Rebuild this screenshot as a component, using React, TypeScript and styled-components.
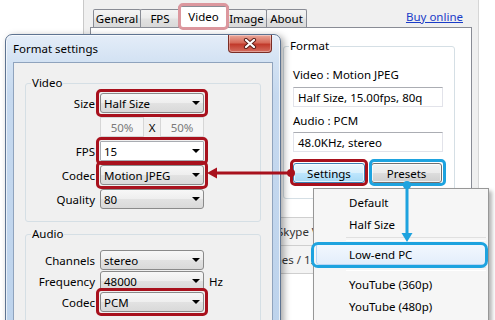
import React from "react";
import styled, { createGlobalStyle, css } from "styled-components";

const FONT = `"Noto Sans", "Open Sans", "DejaVu Sans", sans-serif`;
const RED = "#a8111d";
const BLUE = "#1ea3df";

const GlobalStyle = createGlobalStyle`
  html, body { margin: 0; padding: 0; background: #ffffff; }
  body { font-family: ${FONT}; font-size: 11.5px; color: #000; }
  * { box-sizing: border-box; }
`;

const Stage = styled.div`
  position: relative;
  width: 495px;
  height: 320px;
  overflow: hidden;
  background: #fff;
`;

/* ---------- background main window ---------- */
const MainWindow = styled.div`
  position: absolute;
  left: 83px;
  top: 0;
  width: 396px;
  height: 320px;
  display: flex;
  flex-direction: column;
  background: #f0f0f0;
  border-left: 1px solid #c9c9c9;
  border-right: 1px solid #d6d6d6;
  z-index: 1;
`;

const TabStrip = styled.div`
  display: flex;
  align-items: flex-end;
  height: 27px;
  padding: 0 15px 0 9px;
`;

const Tab = styled.div<{ $w: number; $first?: boolean; $active?: boolean }>`
  position: relative;
  width: ${(p) => p.$w}px;
  height: ${(p) => (p.$active ? 22 : 18)}px;
  margin-left: ${(p) => (p.$first ? 0 : p.$active ? -2 : -1)}px;
  margin-right: ${(p) => (p.$active ? -2 : 0)}px;
  margin-bottom: ${(p) => (p.$active ? -1 : 0)}px;
  padding-bottom: ${(p) => (p.$active ? 2 : 0)}px;
  display: flex;
  align-items: center;
  justify-content: center;
  border: 1px solid #898c95;
  border-bottom: none;
  border-radius: 2px 2px 0 0;
  background: ${(p) =>
    p.$active ? "#ffffff" : "linear-gradient(#f4f4f4, #ececec 45%, #e1e1e1 55%, #d9d9d9)"};
  z-index: ${(p) => (p.$active ? 2 : 1)};
  ${(p) =>
    p.$active &&
    css`
      &::after {
        content: "";
        position: absolute;
        left: -1px;
        right: -1px;
        top: -4px;
        bottom: -2px;
        border: 3px solid #dc979e;
        border-radius: 5px;
      }
    `}
`;

const BuyLink = styled.span`
  margin-left: auto;
  align-self: center;
  margin-top: 5px;
  color: #1a3cc8;
  text-decoration: underline;
`;

const TabPanel = styled.div`
  flex: 1;
  margin: 0 6px;
  background: #ffffff;
  border: 1px solid #898c95;
  border-bottom: none;
  padding-top: 18px;
  display: flex;
  flex-direction: column;
`;

const Group = styled.div<{ $w?: number }>`
  position: relative;
  ${(p) => p.$w !== undefined && `width: ${p.$w}px;`}
  border: 1px solid #d5dfe5;
  border-radius: 3px;
`;

const GroupTitle = styled.span<{ $bg: string }>`
  position: absolute;
  top: -9px;
  left: 5px;
  padding: 0 1px;
  line-height: 16px;
  background: ${(p) => p.$bg};
`;

const FormatGroup = styled(Group)`
  margin-left: 192px;
  padding: 20px 11px 15px 9px;
  display: flex;
  flex-direction: column;
`;

const InfoLabel = styled.div<{ $top: number }>`
  margin-top: ${(p) => p.$top}px;
  line-height: 16px;
`;

const TextBox = styled.div<{ $top: number }>`
  margin-top: ${(p) => p.$top}px;
  height: 20px;
  display: flex;
  align-items: center;
  padding-left: 4px;
  background: #fff;
  border: 1px solid #e2e3ea;
  border-top-color: #abadb3;
`;

const ButtonRow = styled.div`
  margin-top: 11px;
  display: flex;
  gap: 6px;
`;

const PushButton = styled.div<{ $w: number; $default?: boolean; $mark?: "red" | "blue" }>`
  position: relative;
  width: ${(p) => p.$w}px;
  height: 20px;
  display: flex;
  align-items: center;
  justify-content: center;
  border: 1px solid ${(p) => (p.$default ? "#3c7fb1" : "#707070")};
  border-radius: 3px;
  background: ${(p) =>
    p.$default
      ? "linear-gradient(#eaf6fd, #d9f0fc 50%, #bee6fd 51%, #a7d9f5)"
      : "linear-gradient(#f2f2f2, #ebebeb 50%, #dddddd 51%, #cfcfcf)"};
  box-shadow: inset 0 0 0 1px rgba(255, 255, 255, 0.7);
  ${(p) =>
    p.$mark &&
    css`
      &::after {
        content: "";
        position: absolute;
        left: ${p.$mark === "red" ? -4 : -3}px;
        right: ${p.$mark === "red" ? -4 : -5}px;
        top: -5px;
        bottom: -4px;
        border: 3px solid ${p.$mark === "red" ? RED : BLUE};
        border-radius: 5px;
      }
    `}
`;

const ListBox = styled.div`
  margin: 18px 9px 0;
  border-top: 1px solid #cfcfcf;
`;

const ListRow = styled.div<{ $indent: number }>`
  height: 28px;
  display: flex;
  align-items: center;
  padding-left: ${(p) => p.$indent}px;
  background: #f4f4f4;
  border-bottom: 1px solid #cfcfcf;
  color: #333;
  white-space: nowrap;
`;

/* ---------- dialog ---------- */
const Dialog = styled.div`
  position: absolute;
  left: 5px;
  top: 34px;
  width: 276px;
  height: 300px;
  display: flex;
  flex-direction: column;
  padding: 0 7px;
  border: 1px solid #5d7391;
  border-radius: 7px 7px 0 0;
  background: linear-gradient(180deg, #e4edf8 0%, #d3e2f3 26px, #c6d9ef 60px, #bdd3ec 100%);
  box-shadow: inset 0 0 0 1px rgba(255, 255, 255, 0.65), 3px 2px 7px rgba(0, 0, 0, 0.35);
  z-index: 2;
`;

const TitleBar = styled.div`
  display: flex;
  align-items: center;
  height: 27px;
`;

const Title = styled.div`
  font-size: 11.5px;
  color: #000;
`;

const CloseButton = styled.div`
  align-self: flex-start;
  margin-left: auto;
  margin-right: 1px;
  width: 44px;
  height: 18px;
  display: flex;
  align-items: center;
  justify-content: center;
  border: 1px solid #7a2d25;
  border-top: none;
  border-radius: 0 0 4px 4px;
  background: linear-gradient(#eaa89b, #d66a59 45%, #c13a2b 55%, #d46e60);
  box-shadow: inset 0 0 0 1px rgba(255, 255, 255, 0.35);
`;

const Client = styled.div`
  flex: 1;
  background: #f0f0f0;
  border: 1px solid #8fa3bd;
  padding: 20px 11px 0;
  display: flex;
  flex-direction: column;
`;

const FormGroup = styled(Group)<{ $top: number; $pt: number; $pb: number }>`
  margin-top: ${(p) => p.$top}px;
  padding: ${(p) => p.$pt}px 0 ${(p) => p.$pb}px;
`;

const FormGrid = styled.div<{ $gap: number }>`
  display: grid;
  grid-template-columns: 69px 104px auto;
  column-gap: 5px;
  row-gap: ${(p) => p.$gap}px;
  align-items: center;
`;

const FieldLabel = styled.div`
  text-align: right;
  white-space: nowrap;
`;

const Unit = styled.div``;

const Combo = styled.div<{ $edit?: boolean; $mark?: boolean }>`
  position: relative;
  height: 20px;
  display: flex;
  align-items: center;
  padding-left: 3px;
  border: 1px solid ${(p) => (p.$edit ? "#a9acb2" : "#8a8a8a")};
  border-radius: ${(p) => (p.$edit ? "1px" : "3px")};
  background: ${(p) =>
    p.$edit ? "#ffffff" : "linear-gradient(#f7f7f7, #eeeeee 50%, #e2e2e2 51%, #d9d9d9)"};
  ${(p) =>
    p.$mark &&
    css`
      &::after {
        content: "";
        position: absolute;
        inset: -5px;
        border: 3px solid ${RED};
        border-radius: 5px;
      }
    `}
`;

const Caret = styled.span`
  margin-left: auto;
  margin-right: 3px;
  width: 0;
  height: 0;
  border-left: 4px solid transparent;
  border-right: 4px solid transparent;
  border-top: 4px solid #000;
`;

const ScaleRow = styled.div`
  display: flex;
  align-items: center;
  height: 20px;
`;

const ScaleBox = styled.div`
  width: 44px;
  height: 20px;
  display: flex;
  align-items: center;
  justify-content: center;
  background: #f6f6f6;
  border: 1px solid #d6d6d6;
  color: #7a7a7a;
`;

const ScaleSep = styled.div`
  width: 16px;
  text-align: center;
`;

/* ---------- popup menu ---------- */
const Menu = styled.div`
  position: absolute;
  left: 313px;
  top: 188px;
  width: 176px;
  height: 150px;
  padding: 2px;
  background: #f6f6f6;
  border: 1px solid #979797;
  box-shadow: 3px 3px 4px rgba(0, 0, 0, 0.3);
  z-index: 3;
`;

const MenuItem = styled.div<{ $hot?: boolean }>`
  position: relative;
  height: 22px;
  display: flex;
  align-items: center;
  padding-left: 32px;
  border: 1px solid transparent;
  border-radius: 3px;
  ${(p) =>
    p.$hot &&
    css`
      border-color: #b8d6f6;
      background: linear-gradient(#f3f8fe, #e3eefb);
      &::after {
        content: "";
        position: absolute;
        left: -6px;
        right: -3px;
        top: -2px;
        bottom: -4px;
        border: 3px solid ${BLUE};
        border-radius: 7px;
      }
    `}
`;

const MenuSeparator = styled.div`
  height: 8px;
  display: flex;
  align-items: center;
  padding-left: 30px;
  &::before {
    content: "";
    flex: 1;
    height: 2px;
    border-top: 1px solid #e0e0e0;
    border-bottom: 1px solid #ffffff;
  }
`;

const Overlay = styled.svg`
  position: absolute;
  left: 0;
  top: 0;
  width: 495px;
  height: 320px;
  z-index: 5;
  pointer-events: none;
`;

const ComboField = ({ value, edit, mark }: { value: string; edit?: boolean; mark?: boolean }) => (
  <Combo $edit={edit} $mark={mark}>
    <span>{value}</span>
    <Caret />
  </Combo>
);

export default function App() {
  return (
    <Stage>
      <GlobalStyle />

      <MainWindow>
        <TabStrip>
          <Tab $w={48} $first>General</Tab>
          <Tab $w={40}>FPS</Tab>
          <Tab $w={51} $active>Video</Tab>
          <Tab $w={41}>Image</Tab>
          <Tab $w={41}>About</Tab>
          <BuyLink>Buy online</BuyLink>
        </TabStrip>
        <TabPanel>
          <FormatGroup $w={172}>
            <GroupTitle $bg="#ffffff">Format</GroupTitle>
            <InfoLabel $top={0}>Video : Motion JPEG</InfoLabel>
            <TextBox $top={4}>Half Size, 15.00fps, 80q</TextBox>
            <InfoLabel $top={6}>Audio : PCM</InfoLabel>
            <TextBox $top={3}>48.0KHz, stereo</TextBox>
            <ButtonRow>
              <PushButton $w={72} $default $mark="red">Settings</PushButton>
              <PushButton $w={71} $mark="blue">Presets</PushButton>
            </ButtonRow>
          </FormatGroup>
          <ListBox>
            <ListRow $indent={177}>Skype Video</ListRow>
            <ListRow $indent={154}>Frames / 15 fps</ListRow>
          </ListBox>
        </TabPanel>
      </MainWindow>

      <Dialog>
        <TitleBar>
          <Title>Format settings</Title>
          <CloseButton>
            <svg width="14" height="11" viewBox="0 0 14 11">
              <path d="M3 2 L11 9 M11 2 L3 9" stroke="#5a1e17" strokeWidth="4.2" strokeLinecap="round" />
              <path d="M3 2 L11 9 M11 2 L3 9" stroke="#ffffff" strokeWidth="2.3" strokeLinecap="round" />
            </svg>
          </CloseButton>
        </TitleBar>
        <Client>
          <FormGroup $top={0} $pt={9} $pb={12}>
            <GroupTitle $bg="#f0f0f0">Video</GroupTitle>
            <FormGrid $gap={4}>
              <FieldLabel>Size</FieldLabel>
              <ComboField value="Half Size" mark />
              <span />
              <span />
              <ScaleRow>
                <ScaleBox>50%</ScaleBox>
                <ScaleSep>X</ScaleSep>
                <ScaleBox>50%</ScaleBox>
              </ScaleRow>
              <span />
              <FieldLabel>FPS</FieldLabel>
              <ComboField value="15" edit mark />
              <span />
              <FieldLabel>Codec</FieldLabel>
              <ComboField value="Motion JPEG" mark />
              <span />
              <FieldLabel>Quality</FieldLabel>
              <ComboField value="80" />
              <span />
            </FormGrid>
          </FormGroup>
          <FormGroup $top={12} $pt={15} $pb={12}>
            <GroupTitle $bg="#f0f0f0">Audio</GroupTitle>
            <FormGrid $gap={1}>
              <FieldLabel>Channels</FieldLabel>
              <ComboField value="stereo" />
              <span />
              <FieldLabel>Frequency</FieldLabel>
              <ComboField value="48000" />
              <Unit>Hz</Unit>
              <FieldLabel>Codec</FieldLabel>
              <ComboField value="PCM" mark />
              <span />
            </FormGrid>
          </FormGroup>
        </Client>
      </Dialog>

      <Menu>
        <MenuItem>Default</MenuItem>
        <MenuItem>Half Size</MenuItem>
        <MenuSeparator />
        <MenuItem $hot>Low-end PC</MenuItem>
        <MenuSeparator />
        <MenuItem>YouTube (360p)</MenuItem>
        <MenuItem>YouTube (480p)</MenuItem>
      </Menu>

      <Overlay viewBox="0 0 495 320">
        <line x1="214" y1="173" x2="291" y2="173" stroke={RED} strokeWidth="3" />
        <polygon points="207,173 217,167.5 217,178.5" fill={RED} />
        <circle cx="291" cy="173" r="4" fill={RED} />
        <line x1="407" y1="185" x2="407" y2="235" stroke={BLUE} strokeWidth="3" />
        <polygon points="407,242 401.5,233 412.5,233" fill={BLUE} />
        <circle cx="407" cy="185" r="4" fill={BLUE} />
      </Overlay>
    </Stage>
  );
}
